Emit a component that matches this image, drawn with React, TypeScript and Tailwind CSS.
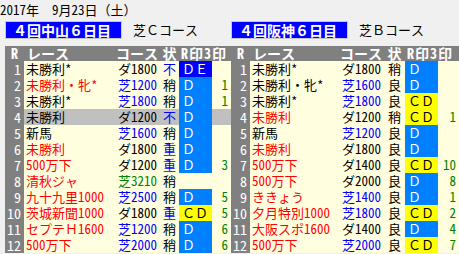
import React from 'react';

type Row = {
  race: string;
  rc: 'k' | 'r';
  course: string;
  cc: 'k' | 'b' | 'g';
  cond: string;
  dc: 'k' | 'b';
  mark: string;
  mk: 'dark' | 'light' | 'yellow' | 'none';
  n: string;
};

const textCls = {
  k: 'text-black',
  r: 'text-[#ff0000]',
  b: 'text-[#0000ff]',
  g: 'text-[#008000]',
};

const markCls = {
  dark: 'bg-[#0000ff] text-white',
  light: 'bg-[#0080ff] text-white',
  yellow: 'bg-[#ffff00] text-black',
  none: '',
};

const nakayama: Row[] = [
  { race: '未勝利*', rc: 'k', course: 'ダ1800', cc: 'k', cond: '不', dc: 'b', mark: 'ＤＥ', mk: 'dark', n: '' },
  { race: '未勝利・牝*', rc: 'r', course: '芝1200', cc: 'b', cond: '稍', dc: 'k', mark: 'Ｄ', mk: 'light', n: '1' },
  { race: '未勝利*', rc: 'k', course: '芝1800', cc: 'b', cond: '稍', dc: 'k', mark: 'Ｄ', mk: 'light', n: '1' },
  { race: '未勝利', rc: 'k', course: 'ダ1200', cc: 'k', cond: '不', dc: 'b', mark: 'Ｄ', mk: 'light', n: '' },
  { race: '新馬', rc: 'k', course: '芝1600', cc: 'b', cond: '稍', dc: 'k', mark: 'Ｄ', mk: 'light', n: '' },
  { race: '未勝利', rc: 'r', course: 'ダ1800', cc: 'k', cond: '重', dc: 'b', mark: 'Ｄ', mk: 'light', n: '' },
  { race: '500万下', rc: 'r', course: 'ダ1200', cc: 'k', cond: '重', dc: 'b', mark: 'Ｄ', mk: 'light', n: '3' },
  { race: '清秋ジャ', rc: 'r', course: '芝3210', cc: 'g', cond: '稍', dc: 'k', mark: '', mk: 'none', n: '' },
  { race: '九十九里1000', rc: 'r', course: '芝2500', cc: 'b', cond: '稍', dc: 'k', mark: 'Ｄ', mk: 'light', n: '5' },
  { race: '茨城新聞1000', rc: 'r', course: 'ダ1800', cc: 'k', cond: '重', dc: 'b', mark: 'ＣＤ', mk: 'yellow', n: '5' },
  { race: 'セプテＨ1600', rc: 'r', course: '芝1200', cc: 'b', cond: '稍', dc: 'k', mark: 'Ｄ', mk: 'light', n: '6' },
  { race: '500万下', rc: 'r', course: '芝2000', cc: 'b', cond: '稍', dc: 'k', mark: 'Ｄ', mk: 'light', n: '6' },
];

const hanshin: Row[] = [
  { race: '未勝利*', rc: 'k', course: 'ダ1800', cc: 'k', cond: '稍', dc: 'k', mark: 'Ｄ', mk: 'light', n: '' },
  { race: '未勝利・牝*', rc: 'k', course: '芝1600', cc: 'b', cond: '良', dc: 'k', mark: 'Ｄ', mk: 'light', n: '' },
  { race: '未勝利*', rc: 'k', course: '芝1800', cc: 'b', cond: '良', dc: 'k', mark: 'ＣＤ', mk: 'yellow', n: '' },
  { race: '未勝利', rc: 'r', course: 'ダ1200', cc: 'k', cond: '稍', dc: 'k', mark: 'ＣＤ', mk: 'yellow', n: '1' },
  { race: '新馬', rc: 'k', course: '芝1200', cc: 'b', cond: '良', dc: 'k', mark: 'Ｄ', mk: 'light', n: '' },
  { race: '未勝利', rc: 'r', course: 'ダ1800', cc: 'k', cond: '良', dc: 'k', mark: 'Ｄ', mk: 'light', n: '' },
  { race: '500万下', rc: 'r', course: 'ダ1400', cc: 'k', cond: '良', dc: 'k', mark: 'ＣＤ', mk: 'yellow', n: '10' },
  { race: '500万下', rc: 'r', course: 'ダ2000', cc: 'k', cond: '良', dc: 'k', mark: 'Ｄ', mk: 'light', n: '8' },
  { race: 'ききょう', rc: 'r', course: '芝1400', cc: 'b', cond: '良', dc: 'k', mark: 'Ｄ', mk: 'light', n: '1' },
  { race: '夕月特別1000', rc: 'r', course: '芝1800', cc: 'b', cond: '良', dc: 'k', mark: 'ＣＤ', mk: 'yellow', n: '2' },
  { race: '大阪スポ1600', rc: 'r', course: 'ダ1400', cc: 'k', cond: '良', dc: 'k', mark: 'Ｄ', mk: 'light', n: '4' },
  { race: '500万下', rc: 'r', course: '芝2000', cc: 'b', cond: '良', dc: 'k', mark: 'ＣＤ', mk: 'yellow', n: '7' },
];

function Venue({ title, course, rows, grid, hi }: { title: string; course: string; rows: Row[]; grid: string; hi?: number }) {
  return (
    <div className="flex flex-col">
      {/* venue title */}
      <div className="flex items-center h-[18px] mt-[1px] mb-[7px]">
        <div className="w-[117px] h-[18px] bg-[#0000ff] border border-[#c8c8c8] text-white font-bold text-[14px] leading-[16px] pl-[7px] whitespace-nowrap">
          {title}
        </div>
        <div className="ml-[11px] text-[13px] leading-[16px]">{course}</div>
      </div>

      {/* header */}
      <div className={`grid ${grid} h-[15px] bg-[#808080] text-white font-bold text-[14px] leading-[15px] whitespace-nowrap`}>
        <div className="text-center">R</div>
        <div className="pl-[3px]">レース</div>
        <div className="text-right pr-[2px]">コース</div>
        <div className="text-center">状</div>
        <div className="col-span-2 pl-[2px] tracking-[1px]">R印3印</div>
      </div>

      {rows.map((r, i) => {
        const bg = hi === i ? 'bg-[#c0c0c0]' : 'bg-[#ffffe0]';
        return (
          <div key={i} className={`grid ${grid} h-[16px] text-[13px] leading-[16px] whitespace-nowrap`}>
            <div className="bg-[#808080] text-white text-right pr-[3px] text-[14px]">{i + 1}</div>
            <div className={`${bg} ${textCls[r.rc]} pl-[2px]`}>{r.race}</div>
            <div className={`${bg} ${textCls[r.cc]} text-right pr-[3px]`}>{r.course}</div>
            <div className={`${bg} ${textCls[r.dc]} text-center`}>{r.cond}</div>
            <div className={`${r.mk === 'none' ? bg : markCls[r.mk]} pl-[3px]`}>{r.mark}</div>
            <div className={`${bg} text-[#008000] text-right pr-[3px]`}>{r.n}</div>
          </div>
        );
      })}
    </div>
  );
}

export default function App() {
  return (
    <div
      className="w-[459px] h-[254px] bg-[#f0f0f0] overflow-hidden text-black"
      style={{ fontFamily: '"Noto Sans Mono CJK JP", "Noto Sans CJK JP", sans-serif' }}
    >
      <div className="h-[20px] text-[13px] leading-[19px]">2017年&nbsp;&nbsp;9月23日（土）</div>
      <div className="flex">
        <div className="pl-[5px] w-[231px]">
          <Venue
            title="４回中山６日目"
            course="芝Ｃコース"
            rows={nakayama}
            grid="grid-cols-[19px_88px_48px_19px_33px_19px]"
            hi={3}
          />
        </div>
        <div className="w-[228px]">
          <Venue
            title="４回阪神６日目"
            course="芝Ｂコース"
            rows={hanshin}
            grid="grid-cols-[19px_90px_44px_21px_33px_21px]"
          />
        </div>
      </div>
    </div>
  );
}
